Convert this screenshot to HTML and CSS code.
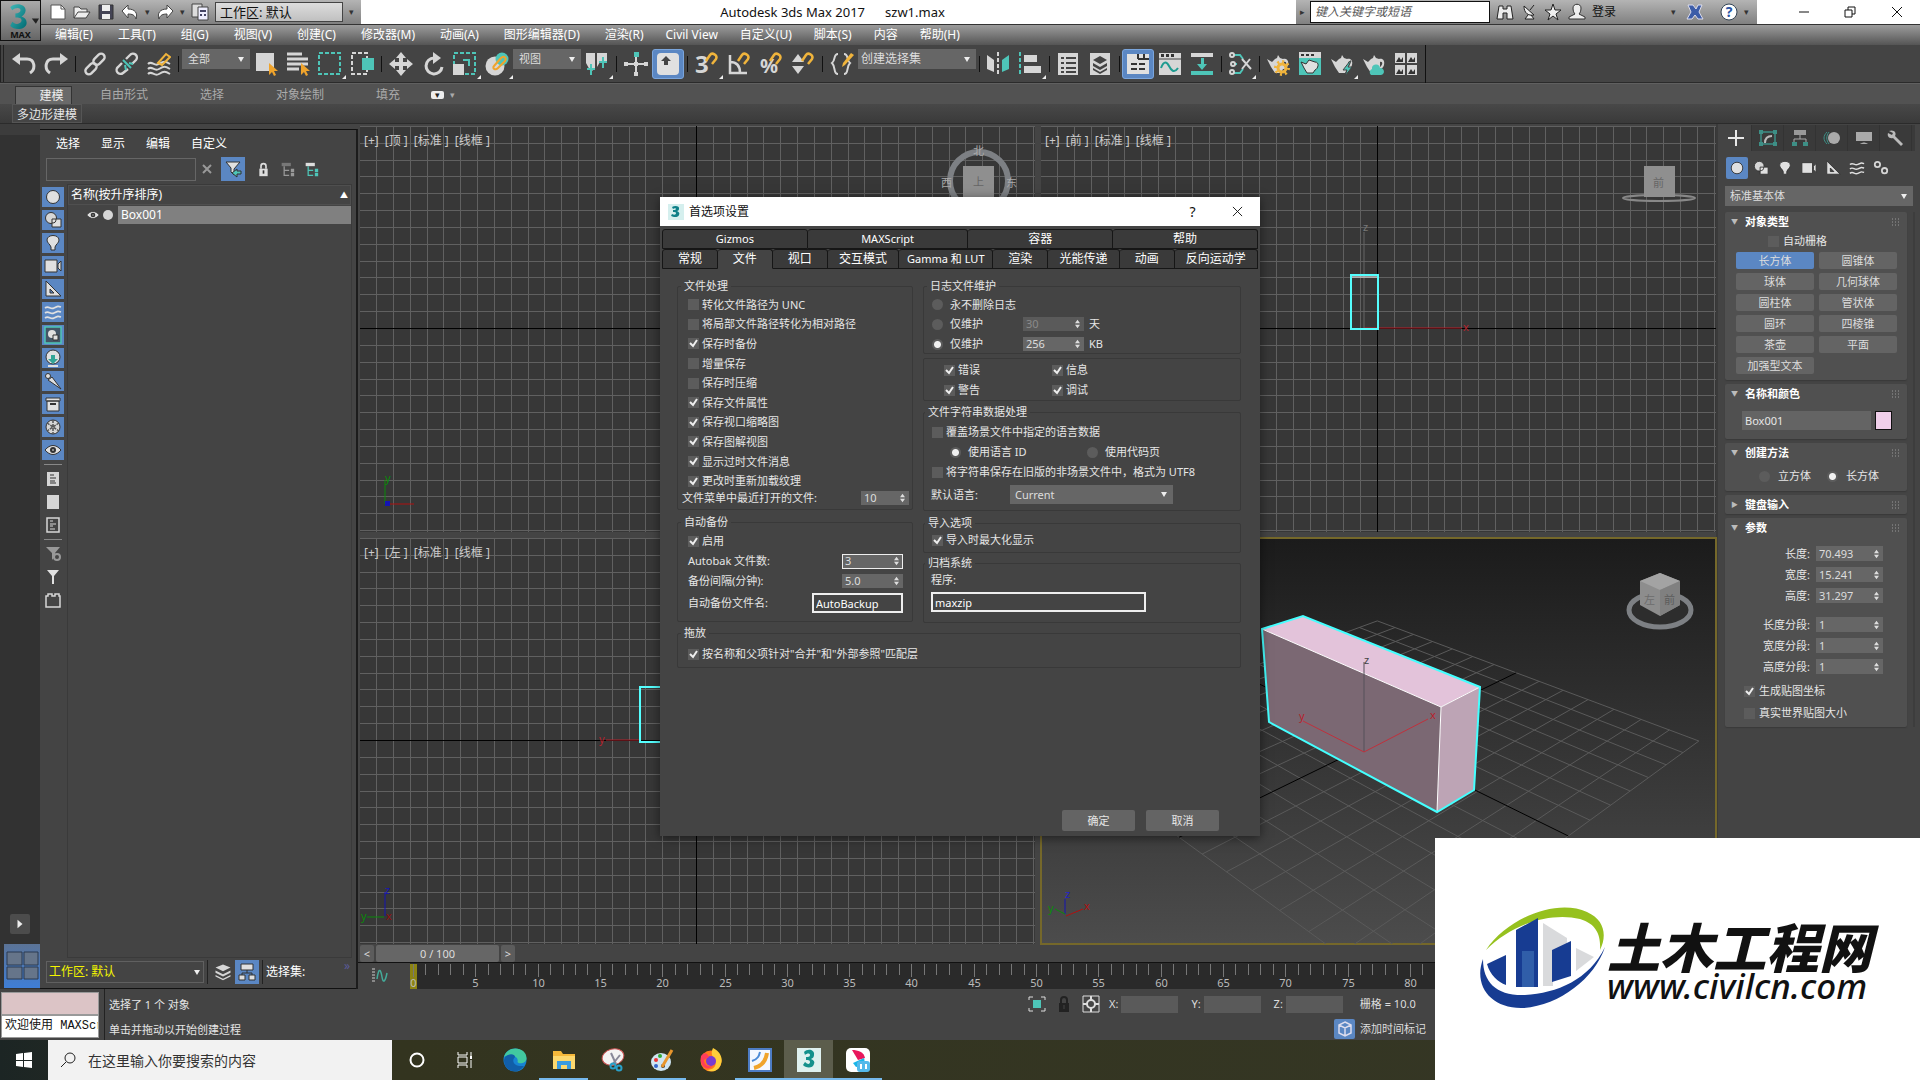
FILE: index.html
```html
<!DOCTYPE html>
<html lang="zh-CN">
<head>
    <meta charset="UTF-8">
    <title>Autodesk 3ds Max 2017 szw1.max</title>
    <link rel="stylesheet" href="styles.css">
</head>
<body>
<!-- 图标 -->
<svg class="sprite">
    <symbol id="i-undo" viewBox="0 0 24 24"><path d="M6 7h9c8 0 9 10 3 14" fill="none" stroke="#d6d6d6" stroke-width="3"/><path d="M0 7l8-6v12z" fill="#d6d6d6"/></symbol>
    <symbol id="i-redo" viewBox="0 0 24 24"><path d="M18 7H9C1 7 0 17 6 21" fill="none" stroke="#d6d6d6" stroke-width="3"/><path d="M24 7l-8-6v12z" fill="#d6d6d6"/></symbol>
    <symbol id="i-link" viewBox="0 0 24 24"><g fill="none" stroke="#d6d6d6" stroke-width="2.4"><rect x="10" y="4" width="13" height="7" rx="3.5" transform="rotate(-45 16 8)"/><rect x="1" y="13" width="13" height="7" rx="3.5" transform="rotate(-45 8 16)"/></g></symbol>
    <symbol id="i-unlink" viewBox="0 0 24 24"><g fill="none" stroke="#d6d6d6" stroke-width="2.4"><path d="M11 7l4-4a3.500 3.500 0 0 1 6 5l-4 4M7 11l-4 4a3.500 3.500 0 0 0 5 6l5-4"/></g><path d="M8 8l8 8M14 11l4 1M10 13l1 5" stroke="#4ec5b8" stroke-width="2"/></symbol>
    <symbol id="i-bind" viewBox="0 0 24 24"><g fill="none" stroke="#d6d6d6" stroke-width="2"><path d="M1 12c4-4 6 3 11 0s6-3 11 0M1 17c4-4 6 3 11 0s6-3 11 0M1 22c4-4 6 3 11 0s6-3 11 0"/></g><path d="M11 11l8-9 4 3-8 8z" fill="none" stroke="#f0b43c" stroke-width="2"/></symbol>
    <symbol id="i-select" viewBox="0 0 24 24"><path d="M2 1h18v18H2z" fill="#d6d6d6"/><path d="M15 11v12l3-3 2 4 2-1-2-4h4z" fill="#f0a42c"/></symbol>
    <symbol id="i-byname" viewBox="0 0 24 24"><path d="M1 2h15M1 7h21M1 12h21M1 17h12" stroke="#d6d6d6" stroke-width="3"/><path d="M15 11v12l3-3 2 4 2-1-2-4h4z" fill="#f0a42c"/></symbol>
    <symbol id="i-rect" viewBox="0 0 24 24"><path d="M1 1h21v21H1z" fill="none" stroke="#4ec5b8" stroke-width="2" stroke-dasharray="4 2"/></symbol>
    <symbol id="i-cross" viewBox="0 0 24 24"><path d="M2 1h15v21H2z" fill="none" stroke="#d6d6d6" stroke-width="2" stroke-dasharray="4 2"/><path d="M12 6h12v12H12z" fill="#4ec5b8"/></symbol>
    <symbol id="i-move" viewBox="0 0 24 24"><path d="M12 0l5 6h-3v4h4V7l6 5-6 5v-3h-4v4h3l-5 6-5-6h3v-4H6v3l-6-5 6-5v3h4V6H7z" fill="#d6d6d6"/></symbol>
    <symbol id="i-rotate" viewBox="0 0 24 24"><path d="M13 6a8 8 0 1 0 8 9" fill="none" stroke="#d6d6d6" stroke-width="3"/><path d="M12 0l8 6-8 6z" fill="#d6d6d6"/></symbol>
    <symbol id="i-scale" viewBox="0 0 24 24"><path d="M1 1h21v21H1z" fill="none" stroke="#4ec5b8" stroke-width="2" stroke-dasharray="4 2"/><path d="M0 12h11v11H0z" fill="#d6d6d6"/><path d="M10 8h6v6" fill="none" stroke="#4ec5b8" stroke-width="2"/></symbol>
    <symbol id="i-place" viewBox="0 0 24 24"><circle cx="10" cy="14" r="9.500" fill="#d6d6d6"/><circle cx="17" cy="7" r="6.500" fill="#4ec5b8"/><path d="M9 14l7-8c3-3 6 0 4 3l-7 7c-3 3-6 0-4-2z" fill="none" stroke="#f0a42c" stroke-width="2"/></symbol>
    <symbol id="i-pivot" viewBox="0 0 24 24"><path d="M1 1h9v15l-4 4-5-9zM12 1h10v9h-7l-3 5z" fill="#d6d6d6"/><path d="M6 12v11M2 17h8M18 5v11M14 10h8" stroke="#4ec5b8" stroke-width="2"/></symbol>
    <symbol id="i-manip" viewBox="0 0 24 24"><path d="M1 12h22M12 4v19" stroke="#d6d6d6" stroke-width="2"/><path d="M10 0h5v5h-5z" fill="#4ec5b8"/><path d="M0 10h4v4H0zM20 10h4v4h-4zM10 10h4v4h-4zM10 20h4v4h-4z" fill="#d6d6d6"/></symbol>
    <symbol id="i-key" viewBox="0 0 24 24"><rect x="1" y="1" width="22" height="22" rx="4" fill="#e0e0e0"/><path d="M10 4l5 5h-3v4H8V9H5z" fill="#444"/></symbol>
    <symbol id="i-magnet" viewBox="0 0 24 24"><path d="M11 9l4-6c2-3 8 0 6 4l-4 5" fill="none" stroke="#f0b43c" stroke-width="2.500"/></symbol>
    <symbol id="i-angle" viewBox="0 0 24 24"><path d="M3 3v18h17M3 10c7 0 10 4 10 11" fill="none" stroke="#d6d6d6" stroke-width="2.500"/></symbol>
    <symbol id="i-spin" viewBox="0 0 24 24"><path d="M7 2l6 8H1zM7 22l6-8H1z" fill="#d6d6d6"/></symbol>
    <symbol id="i-mirror" viewBox="0 0 24 24"><path d="M1 3l7 5v12l-7-3z" fill="#d6d6d6"/><path d="M23 3l-7 5v12l7-3z" fill="#4ec5b8"/><path d="M12 0v24" stroke="#d6d6d6" stroke-width="2" stroke-dasharray="4 2"/></symbol>
    <symbol id="i-align" viewBox="0 0 24 24"><path d="M2 0v24" stroke="#4ec5b8" stroke-width="2" stroke-dasharray="4 2"/><path d="M6 3h13v7H6zM6 14h17v7H6z" fill="#d6d6d6"/></symbol>
    <symbol id="i-table" viewBox="0 0 24 24"><path d="M2 1h20v22H2z" fill="#d6d6d6"/><path d="M5 6h3M10 6h10M5 11h3M10 11h10M5 16h3M10 16h10M5 20h3M10 20h10" stroke="#444" stroke-width="2"/></symbol>
    <symbol id="i-layerbox" viewBox="0 0 24 24"><path d="M2 1h20v22H2z" fill="#d6d6d6"/><path d="M12 4l7 4-7 4-7-4zM5 11l7 4 7-4v3l-7 4-7-4zM5 16l7 4 7-4v2l-7 4-7-4z" fill="#444"/></symbol>
    <symbol id="i-layers" viewBox="0 0 24 24"><path d="M12 2l10 4-10 5L2 6zM2 10l10 5 10-5v3l-10 5-10-5zM2 16l10 5 10-5v2l-10 5-10-5z" fill="#d6d6d6"/></symbol>
    <symbol id="i-ribbon" viewBox="0 0 24 24"><path d="M1 2h22v20H1z" fill="#e0e0e0"/><path d="M12 7h11M12 2v5M18 2v5M5 12h6M13 12h6M5 17h6M13 17h6" stroke="#333" stroke-width="2"/></symbol>
    <symbol id="i-curve" viewBox="0 0 24 24"><path d="M1 1h22v22H1z" fill="#d6d6d6"/><path d="M3 2h3v3H3zM8 2h3v3H8zM13 2h3v3h-3z" fill="#333"/><path d="M1 7h22" stroke="#444"/><path d="M3 16c3-8 6-6 8-2s5 8 9 2" fill="none" stroke="#1e9b90" stroke-width="2"/></symbol>
    <symbol id="i-scheme" viewBox="0 0 24 24"><path d="M1 1h22v4H1z" fill="#d6d6d6"/><path d="M1 19h22v4H1zM11 6h3v6h3l-5 6-5-6h4z" fill="#4ec5b8"/></symbol>
    <symbol id="i-nodes" viewBox="0 0 24 24"><path d="M6 3h6l3 4M6 12h3M15 17l-3 4H6" fill="none" stroke="#4ec5b8" stroke-width="2"/><g fill="#444" stroke="#d6d6d6" stroke-width="2"><circle cx="4" cy="3" r="2"/><circle cx="5" cy="12" r="2"/><circle cx="4" cy="20" r="2"/></g><path d="M14 7l9 10M22 7l-8 10" stroke="#d6d6d6" stroke-width="2"/></symbol>
    <symbol id="i-pot" viewBox="0 0 24 24"><path d="M1 7l5 3 3-3 2-1 1-3 2 3 3 1c4-1 6 2 5 6s-4 4-5 4l-2 4H9l-4-6z" fill="#d6d6d6"/><path d="M18 10c3-1 3 3 0 5z" fill="#444"/></symbol>
    <symbol id="i-gear" viewBox="0 0 24 24"><circle cx="16" cy="16" r="4" fill="none" stroke="#f0b43c" stroke-width="3"/><circle cx="16" cy="16" r="6.500" fill="none" stroke="#f0b43c" stroke-width="3" stroke-dasharray="2 3"/></symbol>
    <symbol id="i-frame" viewBox="0 0 24 24"><path d="M1 0h22v23H1z" fill="#4ec5b8"/><path d="M1 0h22v6H1z" fill="#d6d6d6"/><path d="M3 2h3v2H3zM8 2h3v2H8zM13 2h3v2h-3z" fill="#333"/><path d="M3 10l5 2 3-4 6 2c5 0 3 7 0 8l-2 3H9l-3-5z" fill="#e0e0e0" stroke="#333"/></symbol>
    <symbol id="i-bolt" viewBox="0 0 24 24"><path d="M20 9l-7 9h4l-2 6 7-9h-4l3-6z" fill="#4ec5b8" stroke="#444"/></symbol>
    <symbol id="i-cloud" viewBox="0 0 24 24"><path d="M9 23a3.500 3.500 0 0 1 1-6 4 4 0 0 1 8-1c4-1 6 6 1 7z" fill="#4ec5b8"/></symbol>
    <symbol id="i-gallery" viewBox="0 0 24 24"><path d="M1 1h10v10H1zM13 1h10v10H13zM1 13h10v10H1zM13 13h10v10H13z" fill="#d6d6d6"/><path d="M2 10l3-5 2 3 2-3v5zM14 10l3-5 2 3 2-3v5zM2 22l3-5 2 3 2-3v5zM14 22l3-5 2 3 2-3v5z" fill="#333"/></symbol>
    <symbol id="i-brace" viewBox="0 0 24 24"><path d="M8 2c-5 0-2 6-6 9 4 4 1 11 6 11M14 2c5 0 2 6 6 9-4 4-1 11-6 11" fill="none" stroke="#d6d6d6" stroke-width="2"/><path d="M21 1l3 2-9 10-3 2 1-4z" fill="#f0b43c"/></symbol>

    <symbol id="i-new" viewBox="0 0 18 18"><path d="M2 2h10l4 4v10H2z" fill="#fff" stroke="#555"/><path d="M12 2v4h4" fill="none" stroke="#555"/></symbol>
    <symbol id="i-open" viewBox="0 0 18 18"><path d="M1 15V4h5l2 2h6v3M1 15l4-6h12l-4 6z" fill="#eee" stroke="#444"/></symbol>
    <symbol id="i-save" viewBox="0 0 18 18"><path d="M2 2h14v14H2z" fill="#445" stroke="#333"/><path d="M5 2h8v6H5zM5 11h8v5H5z" fill="#eee"/></symbol>
    <symbol id="i-qundo" viewBox="0 0 18 18"><path d="M1 8l6-6v4c7 0 10 4 8 10-1-4-4-5-8-5v4z" fill="#fff" stroke="#444"/></symbol>
    <symbol id="i-qredo" viewBox="0 0 18 18"><path d="M17 8l-6-6v4c-7 0-10 4-8 10 1-4 4-5 8-5v4z" fill="#fff" stroke="#444"/></symbol>
    <symbol id="i-copy" viewBox="0 0 18 18"><path d="M1 1h10v13H1z" fill="#ddd" stroke="#444"/><path d="M7 4h10v13H7z" fill="#eef" stroke="#444"/><path d="M9 7h6v2H9zM9 11h2v2H9zM13 11h2v2h-2z" fill="#446"/></symbol>
    <symbol id="i-bino" viewBox="0 0 18 18"><path d="M3 3h4v3h4V3h4l2 13h-6v-6H7v6H1z" fill="#eee" stroke="#222"/></symbol>
    <symbol id="i-dish" viewBox="0 0 18 18"><path d="M4 3c0 7 4 10 10 9zM8 12l-3 4h9l-3-4M10 7l4-5" fill="#eee" stroke="#222"/></symbol>
    <symbol id="i-star" viewBox="0 0 18 18"><path d="M9 1l2 6h6l-5 4 2 6-5-4-5 4 2-6-5-4h6z" fill="#eee" stroke="#222"/></symbol>
    <symbol id="i-user" viewBox="0 0 18 18"><path d="M5 5c0-5 8-5 8 0 0 3-1 5-2 6l6 3v2H1v-2l6-3C6 10 5 8 5 5z" fill="#eee" stroke="#333"/></symbol>

    <symbol id="s-geo" viewBox="0 0 18 18"><circle cx="9" cy="9" r="6.500" fill="#e0e0e0" stroke="#333"/></symbol>
    <symbol id="s-shape" viewBox="0 0 18 18"><circle cx="7" cy="7" r="5.500" fill="#d6d6d6" stroke="#333"/><path d="M8 8h9v8H8z" fill="#e0e0e0" stroke="#333"/><path d="M8 12c3 0 4-1 4-4" fill="none" stroke="#333"/></symbol>
    <symbol id="s-light" viewBox="0 0 18 18"><path d="M7 13C6 10 3 9 3 6c0-6 12-6 12 0 0 3-3 4-4 7v3H7z" fill="#e0e0e0" stroke="#333"/></symbol>
    <symbol id="s-cam" viewBox="0 0 18 18"><path d="M1 3h12v12H1zM14 7l3-3v10l-3-3z" fill="#e0e0e0" stroke="#333"/></symbol>
    <symbol id="s-help" viewBox="0 0 18 18"><path d="M2 1v15h15zM6 9v4h4z" fill="#e0e0e0" stroke="#333" fill-rule="evenodd"/></symbol>
    <symbol id="s-wave" viewBox="0 0 18 18"><path d="M1 5c4-3 5 2 9 0s4-2 7-1M1 10c4-3 5 2 9 0s4-2 7-1M1 15c4-3 5 2 9 0s4-2 7-1" fill="none" stroke="#e0e0e0" stroke-width="1.600"/></symbol>
    <symbol id="s-group" viewBox="0 0 18 18"><path d="M1 1h16v16H1z" fill="#456" stroke="#4ec5b8" stroke-width="1.500"/><circle cx="8" cy="8" r="4" fill="#e0e0e0"/><path d="M9 9h5v5H9z" fill="#e0e0e0" stroke="#333"/></symbol>
    <symbol id="s-xref" viewBox="0 0 18 18"><circle cx="9" cy="8" r="7" fill="#e0e0e0" stroke="#333"/><path d="M7 6h4v4h3l-5 5-5-5h3z" fill="#34a596"/><path d="M4 17h10" stroke="#e0e0e0" stroke-width="2"/></symbol>
    <symbol id="s-bone" viewBox="0 0 18 18"><circle cx="4" cy="4" r="2.500" fill="#e0e0e0" stroke="#333"/><path d="M4 8l4-3 9 12z" fill="#e0e0e0" stroke="#333"/></symbol>
    <symbol id="s-box" viewBox="0 0 18 18"><path d="M2 3h14v3H2zM3 6h12v10H3z" fill="#e0e0e0" stroke="#333"/><path d="M6 8h6v2H6z" fill="#333"/></symbol>
    <symbol id="s-frost" viewBox="0 0 18 18"><circle cx="9" cy="9" r="7" fill="#d6d6d6" stroke="#333"/><path d="M9 2v14M3 5l12 8M15 5L3 13" stroke="#555" stroke-width="1.500" stroke-dasharray="3 1"/></symbol>
    <symbol id="s-eye" viewBox="0 0 18 18"><path d="M1 9c5-6 11-6 16 0-5 6-11 6-16 0z" fill="#e0e0e0" stroke="#333"/><circle cx="9" cy="9" r="3" fill="#333"/><circle cx="9" cy="9" r="1" fill="#aaa"/></symbol>
    <symbol id="s-doc" viewBox="0 0 18 18"><path d="M3 2h12v14H3z" fill="#d6d6d6"/><path d="M6 5h4M6 8h6M6 11h5M6 13h6" stroke="#333"/></symbol>
    <symbol id="s-blank" viewBox="0 0 18 18"><path d="M3 2h12v14H3z" fill="#d6d6d6"/></symbol>
    <symbol id="s-docline" viewBox="0 0 18 18"><path d="M3 2h12v14H3z" fill="none" stroke="#d6d6d6" stroke-width="1.500"/><path d="M6 5h3M6 8h6M6 10h3M6 13h5" stroke="#d6d6d6"/></symbol>
    <symbol id="s-filtergear" viewBox="0 0 18 18"><path d="M2 2h14l-5 6v3l-3 4V8z" fill="#999"/><circle cx="13" cy="12" r="3" fill="#444" stroke="#999" stroke-width="2"/></symbol>
    <symbol id="s-filter" viewBox="0 0 18 18"><path d="M3 2h12l-5 6v8H8V8z" fill="#e0e0e0"/></symbol>
    <symbol id="s-brick" viewBox="0 0 18 18"><path d="M2 5h2V3h4v2h3V3h4v2h1v11H2z" fill="none" stroke="#d6d6d6" stroke-width="1.500"/></symbol>
    <symbol id="s-filtersel" viewBox="0 0 18 18"><path d="M2 2h14l-6 7v6l-3-3V8z" fill="#e0e0e0" stroke="#333"/><path d="M17 11v3h-4v3l-5-4 5-4v2z" fill="#4ec5b8" stroke="#333"/></symbol>
    <symbol id="s-lock" viewBox="0 0 18 18"><path d="M6 8V5a3 3 0 0 1 6 0v3" fill="none" stroke="currentColor" stroke-width="2"/><path d="M4 8h10v9H4z" fill="currentColor"/><path d="M8 10h2v4H8z" fill="#333"/></symbol>
    <symbol id="s-tree" viewBox="0 0 18 18"><path d="M2 1h11v4H2z" fill="currentColor"/><path d="M5 5v11h6M5 10h6" fill="none" stroke="var(--c2)" stroke-width="1.500"/><path d="M13 8h4v4h-4zM13 13h4v4h-4z" fill="var(--c2)"/></symbol>
    <symbol id="s-org" viewBox="0 0 18 18"><path d="M3 1h12v6H3zM1 12h6v5H1zM11 12h6v5h-6z" fill="#e0e0e0" stroke="#333"/><path d="M9 7v3M4 12v-2h10v2" fill="none" stroke="#333"/></symbol>
    <symbol id="s-gears" viewBox="0 0 18 18"><g fill="none" stroke="#d6d6d6" stroke-width="2"><circle cx="5" cy="5" r="3"/><circle cx="13" cy="12" r="3"/></g></symbol>
    <symbol id="s-plus" viewBox="0 0 18 18"><path d="M9 1v16M1 9h16" stroke="#e8e8e8" stroke-width="2"/></symbol>
    <symbol id="s-modify" viewBox="0 0 18 18"><path d="M2 3h14v12H2z" fill="none" stroke="#3d8f86" stroke-width="1.500"/><path d="M0 1h4v4H0zM14 1h4v4h-4zM0 13h4v4H0zM14 13h4v4h-4z" fill="#3d8f86"/><path d="M6 14c0-5 2-7 7-7" fill="none" stroke="#bbb" stroke-width="2"/></symbol>
    <symbol id="s-hier" viewBox="0 0 18 18"><path d="M3 1h12v5H3z" fill="#999"/><path d="M9 6v4M3 14v-4h12v4" fill="none" stroke="#aaa"/><path d="M1 13h5v4H1zM12 13h5v4h-5z" fill="#3d8f86"/></symbol>
    <symbol id="s-motion" viewBox="0 0 18 18"><circle cx="11" cy="9" r="6" fill="#aaa"/><path d="M4 3c-4 4-4 8 0 12M6 3c-3 4-3 8 0 12" fill="none" stroke="#3d8f86"/></symbol>
    <symbol id="s-disp" viewBox="0 0 18 18"><path d="M1 3h16v9H1zM5 15c3-2 5-2 8 0z" fill="#aaa"/></symbol>
    <symbol id="s-util" viewBox="0 0 18 18"><path d="M2 2c5-2 8 2 6 5l8 8-2 2-8-8c-4 1-6-2-5-5l4 2 1-2z" fill="#bbb"/></symbol>
    <symbol id="s-spin" viewBox="0 0 6 12"><path d="M3 1l3 4H0zM3 11l3-4H0z" fill="#ddd"/></symbol>
    <symbol id="s-grip" viewBox="0 0 8 8"><path d="M0 1h8M0 4h8M0 7h8" stroke="#999" stroke-dasharray="1 2"/></symbol>
</svg>

<button class="app-button" aria-label="MAX">
    <svg viewBox="3 2 38 27"><defs><linearGradient id="g3" x2="1" y2="1"><stop stop-color="#3fb8b8"/><stop offset="1" stop-color="#006a72"/></linearGradient></defs>
        <path d="M12 7c5-5 15-3 15 3 0 3-2 5-4 6 3 1 5 3 5 6 0 7-12 8-16 3l2-4c4 4 9 2 9-1 0-3-3-3-6-3v-4c3 0 5-1 5-3 0-3-5-3-8 0z" fill="url(#g3)"/><path d="M33 18h7l-3 5z" fill="#222"/></svg>
    <span>MAX</span>
</button>

<header class="titlebar">
    <div class="quick">
        <svg class="q"><use href="#i-new"/></svg>
        <svg class="q"><use href="#i-open"/></svg>
        <svg class="q"><use href="#i-save"/></svg>
        <svg class="q"><use href="#i-qundo"/></svg><i>▾</i>
        <svg class="q"><use href="#i-qredo"/></svg><i>▾</i>
        <svg class="q"><use href="#i-copy"/></svg>
        <select aria-label="工作区"><option>工作区: 默认</option></select>
        <i class="more">▾</i>
    </div>
    <h1><span>Autodesk 3ds Max 2017</span><span>szw1.max</span></h1>
    <div class="search">
        <i class="play">▸</i>
        <input type="text" placeholder="键入关键字或短语" aria-label="搜索">
        <svg class="q"><use href="#i-bino"/></svg>
        <svg class="q"><use href="#i-dish"/></svg>
        <svg class="q"><use href="#i-star"/></svg>
        <svg class="q"><use href="#i-user"/></svg>
        <span>登录</span>
        <i class="push">▾</i>
        <svg class="q exchange" viewBox="0 0 18 18"><path d="M2 2h5l3 4 2-4h4l-3 7 4 7h-5l-3-4-3 4H1l4-7z" fill="#3d5da8" stroke="#dde"/></svg>
        <svg class="q" viewBox="0 0 18 18"><circle cx="9" cy="9" r="8" fill="#fff" stroke="#345"/><text x="9" y="14" text-anchor="middle" font-size="14" font-weight="700" fill="#2a55a5">?</text></svg>
        <i>▾</i>
    </div>
    <div class="winctl">
        <button aria-label="最小化"><svg viewBox="0 0 12 12"><path d="M1 6h10"/></svg></button>
        <button aria-label="还原"><svg viewBox="0 0 12 12"><path d="M1 4h7v7H1zM4 4V1h7v7H8"/></svg></button>
        <button aria-label="关闭"><svg viewBox="0 0 12 12"><path d="M1 1l10 10M11 1L1 11"/></svg></button>
    </div>
</header>

<nav class="menubar">
    <a href="#">编辑(E)</a><a href="#">工具(T)</a><a href="#">组(G)</a><a href="#">视图(V)</a><a href="#">创建(C)</a><a href="#">修改器(M)</a><a href="#">动画(A)</a><a href="#">图形编辑器(D)</a><a href="#">渲染(R)</a><a href="#">Civil View</a><a href="#">自定义(U)</a><a href="#">脚本(S)</a><a href="#">内容</a><a href="#">帮助(H)</a>
</nav>

<div class="toolbar">
    <button><svg><use href="#i-undo"/></svg></button>
    <button><svg><use href="#i-redo"/></svg></button>
    <hr>
    <button><svg><use href="#i-link"/></svg></button>
    <button><svg><use href="#i-unlink"/></svg></button>
    <button><svg><use href="#i-bind"/></svg></button>
    <hr>
    <select aria-label="选择过滤器"><option>全部</option></select>
    <button><svg><use href="#i-select"/></svg></button>
    <button><svg><use href="#i-byname"/></svg></button>
    <button class="fly"><svg><use href="#i-rect"/></svg></button>
    <button><svg><use href="#i-cross"/></svg></button>
    <hr>
    <button><svg><use href="#i-move"/></svg></button>
    <button><svg><use href="#i-rotate"/></svg></button>
    <button class="fly"><svg><use href="#i-scale"/></svg></button>
    <button class="fly"><svg><use href="#i-place"/></svg></button>
    <select aria-label="参考坐标系"><option>视图</option></select>
    <button class="fly"><svg><use href="#i-pivot"/></svg></button>
    <hr>
    <button><svg><use href="#i-manip"/></svg></button>
    <button class="on"><svg><use href="#i-key"/></svg></button>
    <hr>
    <button class="fly"><svg viewBox="0 0 24 24"><text x="0" y="21" class="glyph">3</text><use href="#i-magnet"/></svg></button>
    <button><svg><use href="#i-angle"/><use href="#i-magnet"/></svg></button>
    <button><svg viewBox="0 0 24 24"><text x="1" y="21" class="glyph pct">%</text><use href="#i-magnet"/></svg></button>
    <button><svg><use href="#i-spin"/><use href="#i-magnet"/></svg></button>
    <hr>
    <button><svg><use href="#i-brace"/></svg></button>
    <select class="wide" aria-label="命名选择集"><option>创建选择集</option></select>
    <hr>
    <button><svg><use href="#i-mirror"/></svg></button>
    <button class="fly"><svg><use href="#i-align"/></svg></button>
    <hr>
    <button><svg><use href="#i-table"/></svg></button>
    <button><svg><use href="#i-layerbox"/></svg></button>
    <hr>
    <button class="on"><svg><use href="#i-ribbon"/></svg></button>
    <button><svg><use href="#i-curve"/></svg></button>
    <button><svg><use href="#i-scheme"/></svg></button>
    <hr>
    <button class="fly"><svg><use href="#i-nodes"/></svg></button>
    <hr>
    <button><svg><use href="#i-pot"/><use href="#i-gear"/></svg></button>
    <button><svg><use href="#i-frame"/></svg></button>
    <button class="fly"><svg><use href="#i-pot"/><use href="#i-bolt"/></svg></button>
    <button><svg><use href="#i-pot"/><use href="#i-cloud"/></svg></button>
    <button><svg><use href="#i-gallery"/></svg></button>
    <hr class="end">
</div>

<div class="ribbon">
    <div class="ribbon-tabs">
        <button class="active">建模</button><button>自由形式</button><button>选择</button><button>对象绘制</button><button>填充</button>
        <span class="pill">▾</span><i>▾</i>
    </div>
    <div class="ribbon-panel"><button>多边形建模</button></div>
</div>

<main>
    <aside class="strip">
        <button class="expand" aria-label="展开"><svg viewBox="0 0 12 12"><path d="M3 1l6 5-6 5z" fill="#eee"/></svg></button>
        <button class="layout" aria-label="视口布局"><svg viewBox="0 0 36 44"><path d="M3 8h15v13H3zM20 8h14v13H20zM3 23h15v12H3zM20 23h14v12H20z" fill="#66758a" stroke="#2b3a50"/></svg></button>
    </aside>

    <section class="explorer">
        <nav><a href="#">选择</a><a href="#">显示</a><a href="#">编辑</a><a href="#">自定义</a></nav>
        <div class="find">
            <input type="text" aria-label="查找">
            <svg class="x" viewBox="0 0 12 12"><path d="M2 2l8 8M10 2l-8 8" stroke="#999" stroke-width="2"/></svg>
            <button class="on"><svg><use href="#s-filtersel"/></svg></button>
            <button><svg><use href="#s-lock"/></svg></button>
            <button class="dim"><svg><use href="#s-tree"/></svg></button>
            <button><svg><use href="#s-tree"/></svg></button>
        </div>
        <div class="explorer-body">
            <div class="filters">
                <button class="on"><svg><use href="#s-geo"/></svg></button>
                <button class="on"><svg><use href="#s-shape"/></svg></button>
                <button class="on"><svg><use href="#s-light"/></svg></button>
                <button class="on"><svg><use href="#s-cam"/></svg></button>
                <button class="on"><svg><use href="#s-help"/></svg></button>
                <button class="on"><svg><use href="#s-wave"/></svg></button>
                <button class="on"><svg><use href="#s-group"/></svg></button>
                <button class="on"><svg><use href="#s-xref"/></svg></button>
                <button class="on"><svg><use href="#s-bone"/></svg></button>
                <button class="on"><svg><use href="#s-box"/></svg></button>
                <button class="on"><svg><use href="#s-frost"/></svg></button>
                <button class="on"><svg><use href="#s-eye"/></svg></button>
                <hr>
                <button><svg><use href="#s-doc"/></svg></button>
                <button><svg><use href="#s-blank"/></svg></button>
                <button><svg><use href="#s-docline"/></svg></button>
                <hr>
                <button><svg><use href="#s-filtergear"/></svg></button>
                <button><svg><use href="#s-filter"/></svg></button>
                <button><svg><use href="#s-brick"/></svg></button>
            </div>
            <div class="list">
                <div class="list-head"><span>名称(按升序排序)</span><i>▲</i></div>
                <div class="list-row">
                    <svg><use href="#s-eye"/></svg><b class="dot"></b><span>Box001</span>
                </div>
            </div>
        </div>
        <div class="explorer-foot">
            <select aria-label="工作区"><option>工作区: 默认</option></select>
            <hr>
            <button><svg><use href="#i-layers"/></svg></button>
            <button class="on"><svg><use href="#s-org"/></svg></button>
            <hr>
            <span>选择集:</span><em>»</em>
        </div>
    </section>

    <section class="stage">
        <div class="viewports">
            <div class="view">
                <svg viewBox="360 126 675 406" preserveAspectRatio="xMidYMid slice">
                    <g class="grid" data-x="696" data-y="328"></g>
                    <path d="M385 504v-24" stroke="#0a8a0a"/><path d="M386 504h28" stroke="#b01010"/><path d="M385 501h5v5h-5z" fill="#1414b4"/>
                    <text x="385" y="482" fill="#0a8a0a">y</text>
                    <circle cx="979" cy="181" r="29" fill="none" stroke="#7d8084" stroke-width="6"/>
                    <path d="M963 166h31v32h-31z" fill="#8f8f8f"/><text x="973" y="186" fill="#666">上</text>
                    <text x="973" y="155" fill="#aaa">北</text><text x="941" y="187" fill="#aaa">西</text><text x="1006" y="187" fill="#aaa">东</text>
                </svg>
                <div class="tag"><span>[+]</span><span>[顶 ]</span><span>[标准 ]</span><span>[线框 ]</span></div>
            </div>
            <div class="view">
                <svg viewBox="1041 126 675 406" preserveAspectRatio="xMidYMid slice">
                    <g class="grid" data-x="1377" data-y="328"></g>
                    <path d="M1364 232v96" stroke="#666"/><path d="M1364 328h98" stroke="#b8222c"/>
                    <path d="M1351 275h27v54h-27z" fill="none" stroke="#5ff" stroke-width="2"/><path d="M1352 277h25" stroke="#fff"/>
                    <text x="1363" y="231" fill="#777">z</text><text x="1463" y="331" fill="#b8222c">x</text>
                    <ellipse cx="1659" cy="198" rx="36" ry="3" fill="none" stroke="#888" stroke-width="2"/>
                    <path d="M1644 166h31v31h-31z" fill="#8f8f8f"/><text x="1653" y="187" fill="#666">前</text>
                </svg>
                <div class="tag"><span>[+]</span><span>[前 ]</span><span>[标准 ]</span><span>[线框 ]</span></div>
            </div>
            <div class="view">
                <svg viewBox="360 538 675 406" preserveAspectRatio="xMidYMid slice">
                    <g class="grid" data-x="696" data-y="740"></g>
                    <path d="M606 740h34" stroke="#b8222c"/><text x="599" y="743" fill="#b8222c">y</text>
                    <path d="M640 687h40v55h-40z" fill="none" stroke="#5ff" stroke-width="2"/>
                    <path d="M385 916v-24" stroke="#1414b4"/><path d="M384 917h-17" stroke="#0a8a0a"/>
                    <text x="385" y="894" fill="#1414b4">z</text><text x="361" y="920" fill="#0a8a0a">y</text><text x="386" y="920" fill="#901010">x</text>
                </svg>
                <div class="tag"><span>[+]</span><span>[左 ]</span><span>[标准 ]</span><span>[线框 ]</span></div>
            </div>
            <div class="view persp">
                <svg viewBox="1041 538 675 406" preserveAspectRatio="xMidYMid slice">
                    <g class="floor"></g>
                    <path d="M1262 629l179 78-4 105-168-90z" fill="#7b6873"/>
                    <path d="M1262 629l41-13 177 71-39 20z" fill="#e3c3da"/>
                    <path d="M1441 707l39-20-6 103-37 22z" fill="#bda4b5"/>
                    <path d="M1262 629l179 78 39-20M1441 707l-4 105" fill="none" stroke="#fff"/>
                    <path d="M1262 629l41-13 177 71-6 103-37 22-168-90z" fill="none" stroke="#4ff" stroke-width="2"/>
                    <path d="M1364 752v-90" stroke="#56505a"/><path d="M1303 721l61 31 64-33" fill="none" stroke="#c0303c"/>
                    <text x="1364" y="664" fill="#444">z</text><text x="1299" y="720" fill="#b8222c">y</text><text x="1430" y="719" fill="#b8222c">x</text>
                    <path d="M1065 914v-15" stroke="#1414b4"/><path d="M1065 914l-10-5" stroke="#0a8a0a"/><path d="M1066 916l17-7" stroke="#b01010"/>
                    <text x="1065" y="898" fill="#2222c8">z</text><text x="1048" y="912" fill="#0a8a0a">y</text><text x="1084" y="910" fill="#b01010">x</text>
                    <ellipse cx="1660" cy="610" rx="31" ry="17" fill="#2d2d2d" stroke="#7d8084" stroke-width="5"/>
                    <path d="M1660 573l20 8v24l-20 11-20-11v-24z" fill="#8d8d8d"/><path d="M1660 573l20 8-20 9-20-9z" fill="#a3a3a3"/><path d="M1660 590l20-9v24l-20 11z" fill="#808080"/>
                    <text x="1644" y="604" fill="#6c6c6c">左</text><text x="1664" y="604" fill="#5c5c5c">前</text>
                </svg>
            </div>
        </div>
        <div class="slider">
            <button>&lt;</button><span>0 / 100</span><button>&gt;</button>
        </div>
        <div class="track">
            <svg class="wave" viewBox="0 0 18 18"><path d="M2 2h3M2 5h3M2 8h3M2 11h3M2 14h3" stroke="#ccc"/><path d="M7 12c2-14 4-8 5-2s3 6 5-4" fill="none" stroke="#4a9" stroke-width="1.500"/></svg>
            <svg class="ticks" viewBox="410 963 1306 26" preserveAspectRatio="xMinYMin slice"></svg>
        </div>
    </section>

    <aside class="command">
        <div class="ctabs">
            <button class="active"><svg><use href="#s-plus"/></svg></button>
            <button><svg><use href="#s-modify"/></svg></button>
            <button><svg><use href="#s-hier"/></svg></button>
            <button><svg><use href="#s-motion"/></svg></button>
            <button><svg><use href="#s-disp"/></svg></button>
            <button><svg><use href="#s-util"/></svg></button>
        </div>
        <div class="cats">
            <button class="on"><svg><use href="#s-geo"/></svg></button>
            <button><svg><use href="#s-shape"/></svg></button>
            <button><svg><use href="#s-light"/></svg></button>
            <button><svg><use href="#s-cam"/></svg></button>
            <button><svg><use href="#s-help"/></svg></button>
            <button><svg><use href="#s-wave"/></svg></button>
            <button><svg><use href="#s-gears"/></svg></button>
        </div>
        <select class="kind" aria-label="类别"><option>标准基本体</option></select>
        <div class="rollups">
            <div class="rollup">
                <h3><i>▼</i>对象类型<svg><use href="#s-grip"/></svg></h3>
                <label class="auto"><input type="checkbox">自动栅格</label>
                <div class="types">
                    <button class="on">长方体</button><button>圆锥体</button>
                    <button>球体</button><button>几何球体</button>
                    <button>圆柱体</button><button>管状体</button>
                    <button>圆环</button><button>四棱锥</button>
                    <button>茶壶</button><button>平面</button>
                    <button>加强型文本</button>
                </div>
            </div>
            <div class="rollup">
                <h3><i>▼</i>名称和颜色<svg><use href="#s-grip"/></svg></h3>
                <div class="name"><input type="text" value="Box001" aria-label="名称"><button aria-label="颜色"></button></div>
            </div>
            <div class="rollup">
                <h3><i>▼</i>创建方法<svg><use href="#s-grip"/></svg></h3>
                <div class="method">
                    <label><input type="radio" name="method">立方体</label>
                    <label><input type="radio" name="method" checked>长方体</label>
                </div>
            </div>
            <div class="rollup">
                <h3><i>▶</i>键盘输入<svg><use href="#s-grip"/></svg></h3>
            </div>
            <div class="rollup">
                <h3><i>▼</i>参数<svg><use href="#s-grip"/></svg></h3>
                <div class="params">
                    <label>长度:<span class="spin"><input type="text" value="70.493"><svg><use href="#s-spin"/></svg></span></label>
                    <label>宽度:<span class="spin"><input type="text" value="15.241"><svg><use href="#s-spin"/></svg></span></label>
                    <label>高度:<span class="spin"><input type="text" value="31.297"><svg><use href="#s-spin"/></svg></span></label>
                </div>
                <div class="params">
                    <label>长度分段:<span class="spin"><input type="text" value="1"><svg><use href="#s-spin"/></svg></span></label>
                    <label>宽度分段:<span class="spin"><input type="text" value="1"><svg><use href="#s-spin"/></svg></span></label>
                    <label>高度分段:<span class="spin"><input type="text" value="1"><svg><use href="#s-spin"/></svg></span></label>
                </div>
                <div class="maps">
                    <label><input type="checkbox" checked>生成贴图坐标</label>
                    <label><input type="checkbox">真实世界贴图大小</label>
                </div>
            </div>
        </div>
    </aside>
</main>

<footer class="status">
    <div class="listener"><div></div><div>欢迎使用 MAXScr</div></div>
    <div class="msg"><p>选择了 1 个 对象</p><p>单击并拖动以开始创建过程</p></div>
    <div class="coords">
        <div class="coord-row">
            <svg viewBox="0 0 18 18"><path d="M1 5V2h4M13 2h4v3M17 13v3h-4M5 16H1v-3" fill="none" stroke="#ddd"/><path d="M5 5h8v8H5z" fill="#4ec5b8"/></svg>
            <svg class="lock"><use href="#s-lock"/></svg>
            <svg viewBox="0 0 18 18"><path d="M1 1h16v16H1z" fill="none" stroke="#ddd"/><circle cx="9" cy="9" r="4" fill="none" stroke="#ddd" stroke-width="2"/><path d="M9 1v4M9 13v4M1 9h4M13 9h4" stroke="#ddd" stroke-width="2"/></svg>
            <label>X:<input type="text"></label>
            <label>Y:<input type="text"></label>
            <label>Z:<input type="text"></label>
            <span>栅格 = 10.0</span>
        </div>
        <div class="tag-row">
            <button class="on" aria-label="时间标记"><svg viewBox="0 0 18 18"><path d="M9 2l6 3v8l-6 3-6-3V5zM3 5l6 3 6-3M9 8v8" fill="none" stroke="#dde" stroke-width="1.500"/></svg></button>
            <span>添加时间标记</span>
        </div>
    </div>
</footer>

<footer class="taskbar">
    <button class="start" aria-label="开始"><svg viewBox="0 0 16 16"><path d="M0 2l7-1v7H0zM8 1l8-1v8H8zM0 9h7v6l-7-1zM8 9h8v7l-8-1z" fill="#fff"/></svg></button>
    <label class="tsearch">
        <svg viewBox="0 0 16 16"><circle cx="10" cy="6" r="5" fill="none" stroke="#222"/><path d="M6 10l-5 5" stroke="#222"/></svg>
        <input type="text" placeholder="在这里输入你要搜索的内容">
    </label>
    <button><svg viewBox="0 0 24 24"><circle cx="12" cy="12" r="6.500" fill="none" stroke="#fff" stroke-width="2"/></svg></button>
    <button><svg viewBox="0 0 24 24"><path d="M4 4v3h9V4M4 9h9v6H4zM4 20v-3h9v3M17 4v4M17 12v8" fill="none" stroke="#fff"/><path d="M16 8h2v3h-2z" fill="#fff"/></svg></button>
    <button><svg viewBox="0 0 24 24"><circle cx="12" cy="12" r="11.500" fill="#1783d3"/><path d="M1 9C4-3 24-2 23.500 11c-1 5-8 5-9 3 2-6-8-9-13.500-5z" fill="#42c8a0"/><path d="M2 9c4-4 10-3 10 0-4 4-1 10 9 9-6 9-20 6-20-6z" fill="#115ea8"/></svg></button>
    <button class="run"><svg viewBox="0 0 24 24"><path d="M1 3h8l2 3h12v15H1z" fill="#f5b83a"/><path d="M1 8h22v13H1z" fill="#fcd86e"/><path d="M5 13h14v8h-4v-4H9v4H5z" fill="#3a9be0"/></svg></button>
    <button><svg viewBox="0 0 24 24"><ellipse cx="12" cy="9" rx="11" ry="8" fill="#f3f3f3" stroke="#c55" transform="rotate(-15 12 9)"/><path d="M10 5l5 11M19 7l-8 10" stroke="#889" stroke-width="2"/><g fill="none" stroke="#2aa0c8" stroke-width="2"><circle cx="12" cy="18" r="2.500"/><circle cx="18" cy="20" r="2.500"/></g></svg></button>
    <button class="run"><svg viewBox="0 0 24 24"><ellipse cx="11" cy="14" rx="10" ry="9" fill="#cfe5f2"/><circle cx="6" cy="12" r="2" fill="#e33"/><circle cx="10" cy="8" r="2" fill="#3a3"/><circle cx="6" cy="18" r="2" fill="#36c"/><circle cx="13" cy="18" r="2" fill="#333"/><path d="M12 19L22 2" stroke="#e8962c" stroke-width="3"/></svg></button>
    <button><svg viewBox="0 0 24 24"><circle cx="12" cy="13" r="10.500" fill="#ff7a1c"/><path d="M14 0c8 4 10 11 8 16-2 7-9 9-14 6 8 0 10-6 8-10-2-3-5-5-2-12z" fill="#ffce3a"/><circle cx="12" cy="13" r="5" fill="#7a3bd0"/><path d="M2 8c4-5 7-2 8 1l-5 3c0 5 4 7 9 6C8 24 0 18 2 8z" fill="#ff3d5a"/></svg></button>
    <button class="run"><svg viewBox="0 0 24 24"><path d="M1 1h22v22H1z" fill="#f4f8ff" stroke="#4d7cc4" stroke-width="2"/><path d="M6 20c9-2 12-8 13-15" fill="none" stroke="#f0a42c" stroke-width="4"/><path d="M4 13c6-2 7-5 8-9" fill="none" stroke="#4c8bd6" stroke-width="2"/></svg></button>
    <button class="run active"><svg viewBox="0 0 24 24"><path d="M0 0h24v24H0z" fill="#dff1ef"/><path d="M7 4c4-4 11-2 10 3 0 2-1 3-3 4 3 1 4 3 3 5-1 5-9 4-11 1l2-3c3 3 5 2 5 0s-2-2-4-2V9c2 0 4 0 4-2s-3-2-5 0z" fill="#15918c"/></svg></button>
    <button class="run"><svg viewBox="0 0 24 24"><rect width="24" height="24" rx="5" fill="#fff"/><path d="M6 2c6 0 12 2 13 8l-7 2z" fill="#e8175c"/><path d="M7 15l11-5c2 5-2 8-8 9z" fill="#19b5e8"/><rect x="11" y="13" width="13" height="11" rx="3" fill="#54b9ea"/><path d="M15 16v5M20 16v5" stroke="#fff" stroke-width="2"/></svg></button>
</footer>

<!-- 首选项设置 -->
<section class="dialog">
    <header>
        <svg viewBox="0 0 16 16"><path d="M0 0h16v16H0z" fill="#d5efee"/><path d="M4 3c3-2 8-1 7 2 0 1-1 2-2 2 2 1 3 2 2 4-1 3-6 2-8 1l1-2c2 1 4 1 4-1 0-1-1-1-3-1V6c1 0 3 0 3-1s-2-1-3 0z" fill="#0e8088"/></svg>
        <h2>首选项设置</h2>
        <button aria-label="帮助">?</button>
        <button aria-label="关闭"><svg viewBox="0 0 12 12"><path d="M1 1l10 10M11 1L1 11" stroke="#111"/></svg></button>
    </header>
    <div class="tabs tabs-top"><button>Gizmos</button><button>MAXScript</button><button>容器</button><button>帮助</button></div>
    <div class="tabs tabs-bottom"><button>常规</button><button class="active">文件</button><button>视口</button><button>交互模式</button><button>Gamma 和 LUT</button><button>渲染</button><button>光能传递</button><button>动画</button><button>反向运动学</button></div>
    <form>
        <div class="col">
            <fieldset class="files">
                <legend>文件处理</legend>
                <div class="checks">
                    <label><input type="checkbox">转化文件路径为 UNC</label>
                    <label><input type="checkbox">将局部文件路径转化为相对路径</label>
                    <label><input type="checkbox" checked>保存时备份</label>
                    <label><input type="checkbox">增量保存</label>
                    <label><input type="checkbox">保存时压缩</label>
                    <label><input type="checkbox" checked>保存文件属性</label>
                    <label><input type="checkbox" checked>保存视口缩略图</label>
                    <label><input type="checkbox" checked>保存图解视图</label>
                    <label><input type="checkbox" checked>显示过时文件消息</label>
                    <label><input type="checkbox" checked>更改时重新加载纹理</label>
                </div>
                <label class="recent">文件菜单中最近打开的文件:<span class="spin"><input type="text" value="10"><svg><use href="#s-spin"/></svg></span></label>
            </fieldset>
            <fieldset class="backup">
                <legend>自动备份</legend>
                <label><input type="checkbox" checked>启用</label>
                <label>Autobak 文件数:<span class="spin focus"><input type="text" value="3"><svg><use href="#s-spin"/></svg></span></label>
                <label>备份间隔(分钟):<span class="spin"><input type="text" value="5.0"><svg><use href="#s-spin"/></svg></span></label>
                <label>自动备份文件名:<input class="field" type="text" value="AutoBackup"></label>
            </fieldset>
        </div>
        <div class="col">
            <fieldset class="log">
                <legend>日志文件维护</legend>
                <label><input type="radio" name="log">永不删除日志</label>
                <div><label><input type="radio" name="log">仅维护</label><span class="spin off"><input type="text" value="30" aria-label="天数" disabled><svg><use href="#s-spin"/></svg></span>天</div>
                <div><label><input type="radio" name="log" checked>仅维护</label><span class="spin"><input type="text" value="256" aria-label="大小"><svg><use href="#s-spin"/></svg></span>KB</div>
            </fieldset>
            <div class="levels">
                <label><input type="checkbox" checked>错误</label><label><input type="checkbox" checked>信息</label>
                <label><input type="checkbox" checked>警告</label><label><input type="checkbox" checked>调试</label>
            </div>
            <fieldset class="strings">
                <legend>文件字符串数据处理</legend>
                <label><input type="checkbox">覆盖场景文件中指定的语言数据</label>
                <div class="lang"><label><input type="radio" name="lang" checked>使用语言 ID</label><label><input type="radio" name="lang">使用代码页</label></div>
                <label><input type="checkbox">将字符串保存在旧版的非场景文件中，格式为 UTF8</label>
                <label class="deflang">默认语言:<select><option>Current</option></select></label>
            </fieldset>
            <fieldset class="import">
                <legend>导入选项</legend>
                <label><input type="checkbox" checked>导入时最大化显示</label>
            </fieldset>
            <fieldset class="archive">
                <legend>归档系统</legend>
                <label for="prog">程序:</label>
                <input class="field" id="prog" type="text" value="maxzip">
            </fieldset>
        </div>
        <fieldset class="drag">
            <legend>拖放</legend>
            <label><input type="checkbox" checked>按名称和父项针对"合并"和"外部参照"匹配层</label>
        </fieldset>
        <div class="actions"><button type="button">确定</button><button type="button">取消</button></div>
    </form>
</section>

<div class="brand">
    <svg viewBox="0 0 130 104">
        <path d="M9 44C30 12 80-8 110 6c18 8 20 24 13 38 1-14-3-26-20-31C75 6 36 17 9 44z" fill="#96c11f"/>
        <path d="M6 53C-4 80 14 103 46 102 82 100 118 72 128 41 112 74 80 87 48 89 20 90 6 77 6 53z" fill="#173c92"/>
        <path d="M66 17l24 15v12l-14 6v30H66zM99 42l18 9-18 14z" fill="#d9dadc"/>
        <path d="M10 58l19-9v30c-8-3-16-10-19-21zM39 24l22-12v69H39zM75 44l19-9v35l-19 6z" fill="#173c92"/>
        <path d="M45 45h12v36H45z" fill="#4a7fc0" opacity=".5"/>
    </svg>
    <div><strong>土木工程网</strong><span>www.civilcn.com</span></div>
</div>
<script src="script.js"></script>
</body>
</html>
```
FILE: styles.css
```css
*{box-sizing:border-box;}
html,body{height:100%;}
body,h1,h2,h3,p,form,fieldset{margin:0;padding:0;}
body{
    display:flex;
    flex-direction:column;
    min-height:100vh;
    position:relative;
    overflow:hidden;
    background:#444;
    color:#e6e6e6;
    font:11px/14px "Noto Sans","Noto Sans CJK SC",sans-serif;
}
button,input,select{
    margin:0;
    padding:0;
    border:none;
    border-radius:0;
    outline:none;
    background:none;
    color:inherit;
    font:inherit;
}
a{color:inherit;text-decoration:none;}
i,em{font-style:normal;}
svg{display:block;}
.sprite{position:absolute;width:0;height:0;}
hr{
    width:1px;
    margin:0 3px;
    border:none;
    background:#222;
}
select{
    appearance:none;
    background:#666 url("data:image/svg+xml,%3Csvg xmlns='http://www.w3.org/2000/svg' width='6' height='5'%3E%3Cpath d='M0 0h6L3 5z' fill='%23eee'/%3E%3C/svg%3E") no-repeat right 6px center;
}
button.on{background:#5b87c3;}

/* 复选框和单选框 */
input[type="checkbox"],input[type="radio"]{
    appearance:none;
    flex:none;
    width:11px;
    height:11px;
    background:#5c5c5c;
}
input[type="checkbox"]:checked{
    background:#5c5c5c url("data:image/svg+xml,%3Csvg xmlns='http://www.w3.org/2000/svg' width='11' height='11'%3E%3Cpath d='M2 5l3 3 4-6' fill='none' stroke='%23eee' stroke-width='2'/%3E%3C/svg%3E");
}
input[type="radio"]{border-radius:50%;}
input[type="radio"]:checked{background:radial-gradient(#f0f0f0 3px,#5c5c5c 4px);}
label{display:flex;align-items:center;}

/* 微调框 */
.spin{
    display:flex;
    align-items:center;
    width:61px;
    height:14px;
    padding:0 4px 0 3px;
    background:#666;
}
.spin input{flex:1;min-width:0;height:12px;line-height:12px;color:#ddd;}
.spin svg{width:5px;height:10px;}

/* 标题栏 */
.app-button{
    position:absolute;
    z-index:2;
    left:0;
    top:0;
    width:41px;
    height:41px;
    border:1px solid #111;
    background:linear-gradient(#aaa,#666);
    color:#111;
    font-size:9px;
    font-weight:700;
}
.app-button svg{width:39px;height:28px;}
.app-button span{display:block;line-height:10px;}
.titlebar{
    display:flex;
    height:24px;
    background:#fff;
    color:#111;
    font-size:12px;
    line-height:24px;
}
.quick,.search{
    display:flex;
    align-items:center;
    background:linear-gradient(#b4b4b4,#808080);
}
.quick{width:361px;padding-left:49px;gap:6px;}
.quick i,.search i{width:5px;color:#333;font-size:9px;}
.q{flex:none;width:18px;height:18px;}
.quick select{
    flex:1;
    height:20px;
    padding-left:4px;
    border:1px solid #444;
    background:linear-gradient(#ddd,#c0c0c0);
    color:#111;
    font-size:13px;
    line-height:18px;
}
.quick .more{width:12px;}
.titlebar h1{
    flex:1;
    display:flex;
    justify-content:center;
    gap:20px;
    padding-left:8px;
    font-size:13px;
    font-weight:400;
}
.search{width:461px;gap:6px;padding-right:8px;}
.search .play{padding-left:4px;margin-right:3px;}
.search input{
    width:180px;
    height:22px;
    padding-left:4px;
    border:1px solid #111;
    background:#fff;
    font-style:italic;
}
.search input::placeholder{color:#555;}
.search .push{margin-left:auto;margin-right:4px;}
.exchange{margin-right:10px;}
.winctl{display:flex;width:163px;padding-left:24px;}
.winctl button{flex:1;display:flex;align-items:center;justify-content:center;}
.winctl svg{width:12px;height:12px;fill:none;stroke:#111;}

/* 菜单 */
.menubar{
    display:flex;
    gap:25px;
    height:21px;
    padding-left:55px;
    background:linear-gradient(#9c9c9c,#555);
    border-top:1px solid #333;
    color:#fff;
    font-size:12px;
    line-height:20px;
}
.menubar a:nth-child(n+10){margin-left:-3px;}

/* 主工具栏 */
.toolbar{
    display:flex;
    align-items:center;
    height:38px;
    padding-left:8px;
    border-bottom:1px solid #2b2b2b;
    background:linear-gradient(90deg,#222 0 1px,#444 1px 3px,#222 3px 4px,#444 4px);
}
.toolbar button{
    position:relative;
    flex:none;
    display:flex;
    align-items:center;
    justify-content:center;
    width:32px;
    height:30px;
}
.toolbar button.on{border:1px solid #7ba6dd;border-radius:3px;}
.toolbar svg{width:24px;height:24px;overflow:visible;}
.toolbar hr{flex:none;height:16px;background:#111;}
.fly::after{
    content:"";
    position:absolute;
    right:0;
    bottom:0;
    border:2px solid;
    border-color:transparent #eee #eee transparent;
}
.toolbar select{
    flex:none;
    align-self:flex-start;
    width:68px;
    height:20px;
    margin-top:4px;
    padding-left:6px;
    color:#ddd;
}
.toolbar .wide{width:118px;padding-left:3px;font-size:12px;}
.toolbar .wide ~ hr{margin:0 2px 0 3px;}
.toolbar .end{height:38px;}
.glyph{fill:#d6d6d6;font-size:24px;font-weight:700;}
.pct{font-size:20px;}

/* 石墨工具 */
.ribbon{height:41px;border-bottom:1px solid #2b2b2b;font-size:12px;}
.ribbon-tabs{
    display:flex;
    align-items:center;
    height:21px;
    padding:2px 0 0 15px;
    background:#525252;
    border-top:1px solid #606060;
    color:#aaa;
}
.ribbon-tabs button{height:18px;margin-right:52px;line-height:18px;}
.ribbon-tabs .active{
    width:57px;
    margin-right:28px;
    padding-left:16px;
    border:1px solid #333;
    border-bottom:none;
    background:#6a6a6a;
    color:#eee;
}
.pill{
    width:13px;
    height:8px;
    margin:0 6px 0 -21px;
    border-radius:2px;
    background:#eee;
    color:#222;
    font-size:9px;
    line-height:8px;
    text-align:center;
}
.ribbon-tabs i{font-size:9px;}
.ribbon-panel{height:19px;padding-left:12px;background:linear-gradient(#484848,#3a3a3a);}
.ribbon-panel button{width:70px;height:19px;padding-top:2px;border:1px solid #555;background:#454545;}

/* 工作区 */
main{flex:1;display:flex;min-height:0;}
.strip{
    display:flex;
    flex-direction:column;
    justify-content:flex-end;
    align-items:center;
    width:40px;
    border-top:11px solid #3c3c3c;
    background:#323232;
}
.expand{
    display:flex;
    align-items:center;
    justify-content:center;
    width:20px;
    height:20px;
    margin-bottom:10px;
    border-radius:2px;
    background:#4c4c4c;
}
.expand svg{width:10px;height:10px;}
.layout{width:36px;height:44px;margin:0 0 1px 4px;background:linear-gradient(#5b7396,#3f7ed6);}

/* 场景资源管理器 */
.explorer{
    display:flex;
    flex-direction:column;
    width:318px;
    margin-top:5px;
    border-top:1px solid #111;
    border-right:2px solid #1c1c1c;
    font-size:12px;
    line-height:16px;
}
.explorer nav{display:flex;gap:21px;padding:6px 16px 0;color:#fff;}
.explorer svg{width:18px;height:18px;}
.find{display:flex;align-items:center;height:24px;margin:5px 0 3px 6px;color:#ddd;}
.find input{width:150px;height:23px;border:1px solid #666;}
.find .x{width:12px;height:12px;margin:0 8px 0 5px;}
.find button,.explorer-foot button{
    display:flex;
    align-items:center;
    justify-content:center;
    width:24px;
    height:24px;
    --c2:#4ec5b8;
}
.find .on{margin-right:6px;}
.find .dim{color:#777;--c2:#999;}
.explorer .find button:nth-of-type(n+2) svg{width:15px;height:15px;}
.explorer-body{flex:1;display:flex;}
.filters{display:flex;flex-direction:column;gap:3px;width:27px;padding:3px 3px 0 2px;}
.filters button{display:flex;align-items:center;justify-content:center;width:22px;height:20px;}
.filters hr{width:18px;height:1px;margin:1px 2px;background:#888;}
.list{flex:1;margin-right:4px;border:1px solid #3a3a3a;}
.list-head{
    display:flex;
    justify-content:space-between;
    height:20px;
    padding:0 2px;
    border:1px solid #4f4f4f;
    color:#fff;
    line-height:18px;
}
.list-head i{font-size:8px;}
.list-row{display:flex;align-items:center;height:18px;margin-top:1px;padding-left:18px;}
.list-row svg{width:14px;height:14px;}
.dot{width:10px;height:10px;margin:0 5px 0 3px;border-radius:50%;background:#d6d6d6;}
.list-row span{flex:1;height:18px;padding-left:3px;background:#808080;color:#fff;line-height:18px;}
.explorer-foot{
    display:flex;
    align-items:center;
    height:31px;
    padding:0 6px 2px;
    border-bottom:1px solid #111;
    color:#fff;
}
.explorer-foot select{
    width:158px;
    height:22px;
    padding-left:2px;
    border:1px solid #606060;
    background-color:#444;
    background-position:right 3px center;
    color:#f4f400;
}
.explorer-foot hr{height:24px;margin:0 3px;}
.explorer-foot em{align-self:flex-start;margin-left:auto;color:#5a5a9a;}

/* 视口 */
.stage{flex:1;display:flex;flex-direction:column;min-width:0;}
.viewports{
    flex:1;
    display:grid;
    grid-template:1fr 1fr / 1fr 1fr;
    gap:6px;
    min-height:0;
    padding:2px 0 0 2px;
}
.view{position:relative;min-width:0;min-height:0;overflow:hidden;background:#373737;}
.view svg{width:100%;height:100%;position:absolute;}
.view text{font-size:11px;}
.persp{background:linear-gradient(#1b1b1b,#4c4c4c);outline:2px solid #75682a;outline-offset:-1px;}
.tag{
    position:absolute;
    left:4px;
    top:7px;
    display:flex;
    gap:6px;
    color:#ccc;
    font-size:12px;
    line-height:16px;
}
.slider{display:flex;gap:2px;height:18px;padding:1px 2px 0;color:#ddd;}
.slider button,.slider span{
    width:14px;
    height:17px;
    border-radius:2px;
    background:#5c5c5c;
    line-height:17px;
    text-align:center;
}
.slider span{width:123px;background:#666;}
.track{display:flex;align-items:center;height:27px;border-top:1px solid #111;}
.track .wave{flex:none;width:18px;height:18px;margin:0 22px 0 12px;}
.ticks{flex:1;height:26px;background:#2a2a2a;}
.ticks text{fill:#bbb;font-size:11px;text-anchor:middle;}

/* 命令面板 */
.command{width:204px;padding:0 5px 0 9px;border-left:2px solid #3a3a3a;}
.command svg{width:18px;height:18px;}
.ctabs{display:flex;height:26px;margin:1px 0 6px -7px;background:#3a3a3a;}
.ctabs button,.cats button{display:flex;align-items:center;justify-content:center;}
.ctabs button{width:32px;border-right:1px solid #333;}
.ctabs .active{background:#444;}
.cats{display:flex;gap:2px;margin:0 0 7px -1px;}
.cats button{width:22px;height:22px;border-radius:2px;}
.command .cats svg{width:16px;height:16px;}
.kind{display:block;width:100%;height:20px;margin-left:-2px;padding-left:5px;color:#ddd;}
.rollups{
    display:flex;
    flex-direction:column;
    gap:4px;
    margin:6px 0 0 -2px;
    padding-right:6px;
    border-right:2px solid #3d3d3d;
}
.rollup{border-radius:2px;background:#505050;box-shadow:0 1px 1px #3a3a3a;}
.rollup h3{display:flex;align-items:center;height:19px;padding:0 7px 0 6px;color:#fff;font-size:11px;line-height:19px;}
.rollup h3 i{width:14px;color:#bbb;font-size:7px;}
.rollup h3 svg{width:8px;height:8px;margin-left:auto;}
.auto{height:20px;padding-left:43px;gap:4px;}
.types{
    display:grid;
    grid-template-columns:1fr 1fr;
    gap:4px 5px;
    padding:1px 10px 6px 11px;
}
.types button{height:17px;border-radius:2px;background:#646464;line-height:17px;color:#ddd;}
.types button.on{background:#5b87c3;}
.name{display:flex;gap:4px;padding:8px 15px 9px 17px;}
.name input{flex:1;min-width:0;height:19px;padding-left:3px;background:#646464;}
.name button{width:17px;height:19px;border:1px solid #111;background:#f0cfea;}
.method{display:flex;gap:16px;padding:7px 0 8px 34px;}
.method label{gap:8px;}
.params{display:flex;flex-direction:column;gap:6px;padding:14px 24px 0 0;}
.rollup h3 + .params{padding-top:9px;}
.params label{justify-content:flex-end;gap:6px;}
.params .spin{width:67px;height:15px;}
.command .spin svg{width:5px;height:10px;}
.maps{display:flex;flex-direction:column;gap:8px;padding:10px 0 7px 19px;}
.maps label{gap:4px;}

/* 状态栏 */
.status{display:flex;height:51px;}
.listener{width:105px;padding:3px 5px 2px 1px;border-right:1px solid #222;color:#111;font:12px/20px "Liberation Mono","Noto Sans CJK SC",monospace;}
.listener div{height:23px;padding-left:3px;border:1px solid #999;background:#fff;white-space:nowrap;overflow:hidden;}
.listener div:first-child{background:#dcc4c6;}
.msg{flex:1;padding:9px 0 0 4px;}
.msg p + p{margin-top:11px;}
.coords{width:892px;color:#ddd;}
.coord-row,.tag-row{display:flex;align-items:center;}
.coord-row{height:30px;gap:9px;}
.coord-row svg{width:18px;height:18px;}
.coord-row .lock{color:#222;}
.coord-row label{gap:3px;margin-right:4px;}
.coord-row input{width:57px;height:17px;background:#5a5a5a;}
.coord-row span{margin-left:4px;}
.tag-row{height:20px;padding-left:306px;gap:5px;}
.tag-row button{width:21px;height:20px;border-radius:2px;}
.tag-row svg{width:18px;height:18px;margin:auto;}

/* 任务栏 */
.taskbar{display:flex;height:40px;background:linear-gradient(90deg,#1c2524,#33341f 400px,#353726);}
.taskbar button{display:flex;align-items:center;justify-content:center;width:49px;height:40px;}
.taskbar button svg{width:24px;height:24px;}
.taskbar .start{width:48px;}
.taskbar .start svg{width:16px;height:16px;}
.tsearch{width:344px;padding-left:12px;gap:12px;background:#f2f2f2;color:#333;}
.tsearch svg{width:16px;height:16px;}
.tsearch input{flex:1;font-size:14px;}
.tsearch input::placeholder{color:#333;}
.taskbar .run{border-bottom:2px solid #76b9ed;border-top:2px solid transparent;}
.taskbar .active{background:#5c5d4c;}

/* 对话框 */
.dialog{
    position:absolute;
    left:660px;
    top:197px;
    width:600px;
    background:#444;
    box-shadow:0 2px 10px rgba(0,0,0,.5);
}
.dialog > header{display:flex;align-items:center;height:29px;padding-left:8px;background:#fff;color:#111;}
.dialog > header > svg{width:16px;height:16px;margin-right:5px;}
.dialog h2{flex:1;font-size:12px;font-weight:400;}
.dialog > header button{display:flex;align-items:center;justify-content:center;width:45px;height:29px;font-size:14px;}
.dialog > header button svg{width:11px;height:11px;}
.tabs{display:flex;margin:0 2px;}
.tabs button{
    height:20px;
    border:1px solid #161616;
    border-left-width:0;
    border-radius:3px 3px 0 0;
    background:#3a3a3a;
    color:#fff;
    font-size:12px;
    line-height:18px;
}
.tabs button:first-child{border-left-width:1px;}
.tabs-top{padding-top:3px;}
.tabs-top button{flex:146;font-size:11px;}
.tabs-top button:nth-child(2){flex:162;}
.tabs-top button:nth-child(3),.tabs-top button:nth-child(4){font-size:12px;}
.tabs-bottom button{flex:55;white-space:nowrap;}
.tabs-bottom button:nth-child(4),.tabs-bottom button:nth-child(7){flex:72;}
.tabs-bottom button:nth-child(5){flex:95;font-size:11px;}
.tabs-bottom button:nth-child(9){flex:84;}
.tabs-bottom .active{border-bottom-color:#444;background:#444;}
.dialog form{
    display:grid;
    grid-template-columns:236px 318px;
    gap:3px 10px;
    padding:10px 17px 5px;
}
.col{display:flex;flex-direction:column;}
fieldset{
    --pad:0px;
    min-width:0;
    padding-left:var(--pad);
    border:1px solid #393939;
    border-radius:2px;
}
legend{margin-left:calc(3px - var(--pad));padding:0 3px;}
.dialog label{gap:3px;}
.files{height:231px;padding-top:2px;}
.checks{display:grid;grid-auto-rows:1fr;height:196px;padding-left:10px;}
.files .recent{justify-content:space-between;padding:0 3px 0 4px;}
.recent .spin{width:48px;}
.backup{--pad:10px;height:107px;margin-top:5px;padding-top:2px;padding-right:9px;}
.backup label{height:20px;}
.backup label .spin,.backup .field{margin-left:auto;}
.backup label:last-child{height:24px;}
.focus{border:1px solid #eee;padding:0 3px 0 2px;height:15px;}
.field{width:91px;height:20px;padding-left:2px;border:2px solid #eee;color:#fff;}
.log{--pad:8px;height:75px;padding-top:2px;}
.log label{height:19px;width:86px;white-space:nowrap;}
.dialog .log label{gap:7px;}
.log div{display:flex;align-items:center;gap:5px;height:20px;}
.log .off{background:#5a5a5a;}
.off input{color:#8a8a8a;}
.levels{
    display:grid;
    grid-template-columns:108px 1fr;
    height:43px;
    margin:4px 0;
    padding:1px 0 0 20px;
    border:1px solid #393939;
    border-radius:2px;
}
.strings{--pad:8px;height:106px;padding-top:3px;}
.strings legend,.import legend,.archive legend{margin-left:calc(1px - var(--pad));}
.strings label{height:20px;}
.lang{display:flex;gap:50px;padding-left:18px;}
.dialog .lang label{width:87px;gap:7px;white-space:nowrap;}
.dialog .deflang{height:25px;gap:32px;margin-left:-1px;}
.deflang select{width:163px;height:19px;padding-left:5px;color:#ddd;}
.import{--pad:8px;height:37px;margin-top:5px;padding-top:3px;}
.archive{--pad:7px;height:67px;margin-top:3px;}
.archive label{height:20px;}
.archive .field{display:block;width:215px;margin-top:2px;}
.drag{--pad:10px;grid-column:1 / 3;height:42px;padding-top:7px;}
.actions{grid-column:1 / 3;display:flex;justify-content:flex-end;gap:11px;padding:139px 22px 0 0;}
.actions button{width:73px;height:21px;border-radius:2px;background:#646464;}

/* 水印 */
.brand{
    position:absolute;
    right:0;
    bottom:0;
    display:flex;
    width:485px;
    height:242px;
    padding:68px 0 0 42px;
    background:#fff;
    color:#111;
    white-space:nowrap;
}
.brand svg{width:130px;height:104px;}
.brand div{margin-top:14px;}
.brand strong{display:block;font:italic 900 53px/50px "Noto Sans CJK SC",sans-serif;}
.brand span{font:italic 500 35px/32px "Noto Sans","Open Sans",sans-serif;}
```
FILE: script.js
```js
(function(){
    const NS = "http://www.w3.org/2000/svg";
    function add(parent,name,attrs,text){
        let el = document.createElementNS(NS,name);
        for(let k in attrs) el.setAttribute(k,attrs[k]);
        if(text!==undefined) el.textContent = text;
        parent.appendChild(el);
    }
    //正交视口栅格
    document.querySelectorAll(".grid").forEach(g=>{
        let x = +g.dataset.x, y = +g.dataset.y, d = "", step = 16.84;
        for(let i=-30;i<=30;i++){
            if(i===0) continue;
            d += `M${Math.round(x+i*step)+.5} ${y-220}v440M${x-345} ${Math.round(y+i*step)+.5}h690`;
        }
        add(g,"path",{d:d,stroke:"#606060"});
        add(g,"path",{d:`M${x+.5} ${y-220}v440M${x-345} ${y+.5}h690`,stroke:"#000"});
    });
    //透视视口地面，u、v 范围 -1~1
    function floor(u,v){
        let w = .167*u-.159*v+1;
        return ((393.6*u-56.9*v+1375.8)/w).toFixed(1)+" "+((43.8*u-38.2*v+741.3)/w).toFixed(1);
    }
    let f = document.querySelector(".floor"), lines = "";
    for(let i=-7;i<=7;i++){
        if(i===0) continue;
        let t = i/7;
        lines += `M${floor(-1,t)}L${floor(1,t)}M${floor(t,-1)}L${floor(t,1)}`;
    }
    add(f,"path",{d:lines,stroke:"#5a5a5a"});
    add(f,"path",{d:`M${floor(-1,0)}L${floor(1,0)}M${floor(0,-1)}L${floor(0,1)}`,stroke:"#000"});
    //时间轴刻度
    let ticks = document.querySelector(".ticks"), t = "";
    add(ticks,"rect",{x:410,y:964,width:7,height:25,fill:"#8c8414"});
    for(let i=0;i<=81;i++){
        let x = Math.round(413+i*12.46)+.5;
        t += `M${x} 964v${i%5 ? 11 : 13}`;
        if(i%5===0) add(ticks,"text",{x:x,y:987},i);
    }
    add(ticks,"path",{d:t,stroke:"#777"});
})();
```
